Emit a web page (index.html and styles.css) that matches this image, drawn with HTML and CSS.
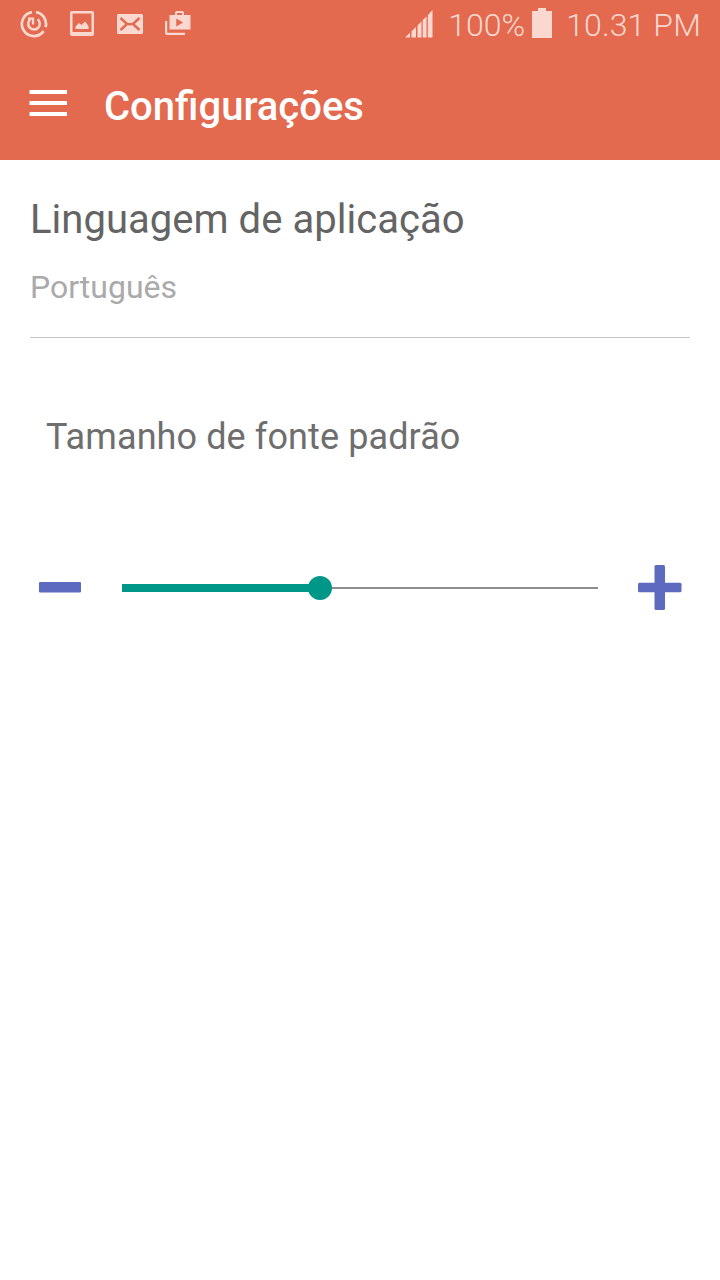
FILE: index.html
```html
<!DOCTYPE html>
<html lang="pt">
<head>
<meta charset="utf-8">
<title>Configurações</title>
<link rel="stylesheet" href="styles.css">
</head>
<body>
<header class="header">
  <div class="status">
    <div class="notifications">
      <svg class="icon" viewBox="0 0 28 28" fill="none" stroke="currentColor" stroke-width="2.7">
        <path d="M12 2.200A12 12 0 1 0 23.600 21.100M16 2.200A12 12 0 0 1 25.600 17.200"/>
        <path d="M10 9.600A5.800 5.800 0 1 0 17.700 9.300" stroke-width="2.500"/>
        <path d="M8 8.700H13V14.500" stroke-width="2.300"/>
      </svg>
      <svg class="icon" viewBox="0 0 28 28" fill="currentColor">
        <path fill-rule="evenodd" d="M4 1H24Q26 1 26 3V24Q26 26 24 26H4Q2 26 2 24V3Q2 1 4 1ZM4.500 3.500V22H23.500V3.500Z"/>
        <path d="M7.500 19V16.500L11 13L13.500 15L17 11.500L20.500 16V19Z"/>
      </svg>
      <svg class="icon" viewBox="0 0 28 28">
        <rect x="1" y="4" width="26" height="20" rx="1.500" fill="currentColor"/>
        <path class="cutout" d="M4.500 8L10.500 13.500Q14 15 17.500 13.500L23.500 8M4.500 20L10.500 14.500M23.500 20L17.500 14.500"/>
      </svg>
      <svg class="icon" viewBox="0 0 28 28" fill="currentColor">
        <path d="M1 11H3.200V22.800H21V25H3Q1 25 1 23Z"/>
        <path fill-rule="evenodd" d="M5.500 5H11V3Q11 1 13 1H18Q20 1 20 3V5H26.500V19.500H5.500ZM13 5H18V3H13ZM12.300 8.500V16.500L19 12.500Z"/>
      </svg>
    </div>
    <div class="device">
      <svg class="signal" viewBox="0 0 28 28" fill="currentColor">
        <path d="M0 27.500L5 22.700V27.500ZM6.500 21.200L11 17V27.500H6.500ZM12.500 15.500L16.500 11.500V27.500H12.500ZM17.700 10.200L21.500 6.500V27.500H17.700ZM22.800 5.200L27.500 0V27.500H22.800Z"/>
      </svg>
      <span class="percent">100%</span>
      <svg class="battery" viewBox="0 0 20 30" fill="currentColor"><path d="M0 3H6V0H14V3H20V30H0Z"/></svg>
      <span class="clock">10.31 PM</span>
    </div>
  </div>
  <div class="toolbar">
    <svg class="menu" viewBox="0 0 38 26" fill="currentColor"><path d="M0.500 0H38V4H0.500ZM0.500 11H38V15H0.500ZM0.500 22H38V26H0.500Z"/></svg>
    <h1 class="title">Configurações</h1>
  </div>
</header>
<main class="settings">
  <section class="language">
    <h2 class="language-label">Linguagem de aplicação</h2>
    <p class="language-value">Português</p>
  </section>
  <section class="font-size">
    <h2 class="font-size-label">Tamanho de fonte padrão</h2>
    <div class="slider-row">
      <svg class="minus" viewBox="0 0 42 11"><rect width="42" height="10.500" rx="1" fill="currentColor"/></svg>
      <div class="slider"><div class="fill"></div><div class="thumb"></div><div class="rest"></div></div>
      <svg class="plus" viewBox="0 0 44 46" fill="currentColor"><rect x="16.500" y="0" width="10.500" height="45" rx="1.500"/><rect x="0" y="17.700" width="43.500" height="9.600" rx="1.500"/></svg>
    </div>
  </section>
</main>
</body>
</html>
```
FILE: styles.css
```css
* { box-sizing: border-box; }
body {
  margin: 0;
  min-height: 1280px;
  background: #fff;
  font-family: Roboto, sans-serif;
}
h1, h2, p { margin: 0; font-weight: 400; }
svg { display: block; flex: none; }
.header { height: 160px; background: #e3694f; color: #fff; }
.status {
  display: flex;
  justify-content: space-between;
  height: 50px;
  padding: 0 19px 0 20px;
  color: #fbd8cf;
}
.notifications { display: flex; gap: 20px; padding-top: 10px; }
.icon { width: 28px; height: 28px; }
.cutout { fill: none; stroke: #e3694f; stroke-width: 2.4; }
.device {
  display: flex;
  font-size: 32px;
  font-weight: 300;
  line-height: 50px;
  white-space: nowrap;
}
.signal { width: 28px; height: 28px; margin: 10px 15px 0 0; }
.battery { width: 20px; height: 30px; margin: 8px 14px 0 7px; }
.clock { letter-spacing: 0.12px; }
.toolbar { display: flex; padding: 33px 29px 0; }
.menu { width: 38px; height: 26px; margin: 7px 37px 0 0; }
.title { font-size: 40px; font-weight: 500; line-height: 48px; }
.settings { padding: 36px 30px 0; }
.language { height: 142px; border-bottom: 1px solid #c4c4c4; }
.language-label { font-size: 40px; line-height: 48px; color: #646464; letter-spacing: 0.03px; }
.language-value { margin-top: 23px; font-size: 32px; line-height: 40px; color: #aaa; }
.font-size-label {
  padding: 76px 16px 0;
  font-size: 36px;
  line-height: 46px;
  letter-spacing: 0.1px;
  color: #6e6e6e;
}
.slider-row { display: flex; align-items: center; height: 48px; margin-top: 104px; }
.minus { width: 42px; height: 11px; margin: 0 0 2px 9px; color: #5c6bc0; }
.slider { display: flex; align-items: center; width: 476px; margin: 0 39.5px 0 41px; }
.fill { width: 198px; height: 8px; background: #009688; }
.thumb {
  width: 24px;
  height: 24px;
  margin-left: -12px;
  border-radius: 50%;
  background: #009688;
}
.rest { flex: 1; height: 2px; background: #8e8e8e; }
.plus { width: 44px; height: 46px; color: #5c6bc0; }
```
